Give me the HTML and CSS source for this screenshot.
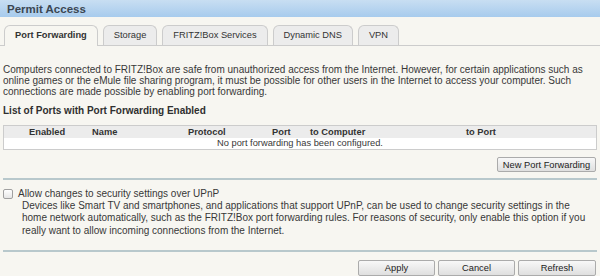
FILE: index.html
```html
<!DOCTYPE html>
<html lang="en">
<head>
  <meta charset="UTF-8">
  <title>Permit Access</title>
  <link rel="stylesheet" href="styles.css">
</head>
<body>
  <div class="page-title">Permit Access</div>

  <ul class="tabs">
    <li class="tab active">Port Forwarding</li>
    <li class="tab">Storage</li>
    <li class="tab">FRITZ!Box Services</li>
    <li class="tab">Dynamic DNS</li>
    <li class="tab">VPN</li>
  </ul>

  <div class="content">
    <p class="intro">Computers connected to FRITZ!Box are safe from unauthorized access from the Internet. However, for certain applications such as online games or the eMule file sharing program, it must be possible for other users in the Internet to access your computer. Such connections are made possible by enabling port forwarding.</p>

    <h4 class="list-title">List of Ports with Port Forwarding Enabled</h4>

    <div class="port-table">
      <div class="port-head">
        <span class="c-enabled">Enabled</span>
        <span>Name</span>
        <span>Protocol</span>
        <span>Port</span>
        <span>to Computer</span>
        <span>to Port</span>
      </div>
      <div class="port-empty">No port forwarding has been configured.</div>
    </div>

    <div class="btn-row new-row">
      <button class="btn">New Port Forwarding</button>
    </div>

    <hr class="sep">

    <div class="upnp">
      <label class="check-line"><input type="checkbox"> Allow changes to security settings over UPnP</label>
      <p class="upnp-desc">Devices like Smart TV and smartphones, and applications that support UPnP, can be used to change security settings in the home network automatically, such as the FRITZ!Box port forwarding rules. For reasons of security, only enable this option if you really want to allow incoming connections from the Internet.</p>
    </div>

    <hr class="sep">

    <div class="btn-row actions">
      <button class="btn wide">Apply</button>
      <button class="btn wide">Cancel</button>
      <button class="btn wide">Refresh</button>
    </div>
  </div>
</body>
</html>
```

FILE: styles.css
```css
body {
  margin: 0;
  background: #f7f6f1;
  font-family: "Liberation Sans", Arial, sans-serif;
  font-size: 10px;
  color: #383838;
}
.page-title {
  height: 17px;
  line-height: 18px;
  padding-left: 7px;
  font-size: 11.5px;
  font-weight: bold;
  color: #3b4652;
  background: linear-gradient(to bottom, #c8def2, #a7cbed);
}
.tabs {
  list-style: none;
  margin: 8px 0 0;
  padding: 0 0 0 4px;
  display: flex;
  gap: 5px;
  height: 20px;
  border-bottom: 1px solid #cccccc;
}
.tab {
  height: 19px;
  line-height: 19px;
  padding: 0 10px;
  border: 1px solid #cccccc;
  border-bottom: none;
  border-radius: 6px 6px 0 0;
  background: #ececec;
  font-size: 9.3px;
  color: #333;
}
.tab.active {
  height: 20px;
  background: #f7f6f1;
  font-weight: bold;
  margin-bottom: -1px;
}
.content {
  padding: 0 3px;
}
.intro {
  margin: 18px 0 0;
  line-height: 11px;
}
.list-title {
  margin: 8px 0 9px;
  font-size: 10px;
  line-height: 11px;
  color: #2f2f2f;
}
.port-table {
  border: 1px solid #cccccc;
  background: #fff;
  font-size: 9.3px;
}
.port-head {
  display: grid;
  grid-template-columns: 88px 96px 84px 38px 156px 1fr;
  background: #ececec;
  height: 12px;
  line-height: 12px;
  font-weight: bold;
  color: #333;
}
.port-head .c-enabled {
  padding-left: 25px;
}
.port-empty {
  text-align: center;
  height: 11px;
  line-height: 11px;
}
.btn-row {
  display: flex;
  justify-content: flex-end;
  gap: 3px;
  padding-right: 1px;
}
.new-row {
  margin-top: 7px;
}
.btn {
  font-family: inherit;
  font-size: 9.3px;
  color: #222;
  height: 15px;
  padding: 0;
  white-space: nowrap;
  border: 1px solid #ababab;
  border-radius: 2px;
  background: linear-gradient(to bottom, #f8f8f8, #dfdfdf);
}
.new-row .btn {
  width: 99px;
}
.btn.wide {
  width: 77px;
  height: 16px;
}
.btn.wide:last-child {
  width: 78px;
}
.sep {
  border: none;
  height: 2px;
  background: #b8c8cc;
  margin: 6px 0 0;
}
.upnp {
  padding: 8px 0 7px;
}
.check-line {
  display: flex;
  align-items: center;
  gap: 5px;
  line-height: 11px;
}
.check-line input {
  appearance: none;
  margin: 0;
  width: 10px;
  height: 10px;
  border: 1px solid #a0a0a0;
  border-radius: 2px;
  background: linear-gradient(to bottom, #ffffff, #e6e6e6);
}
.upnp-desc {
  margin: 1px 0 0;
  padding-left: 19px;
  line-height: 12.3px;
}
.actions {
  margin-top: 8px;
}
```
